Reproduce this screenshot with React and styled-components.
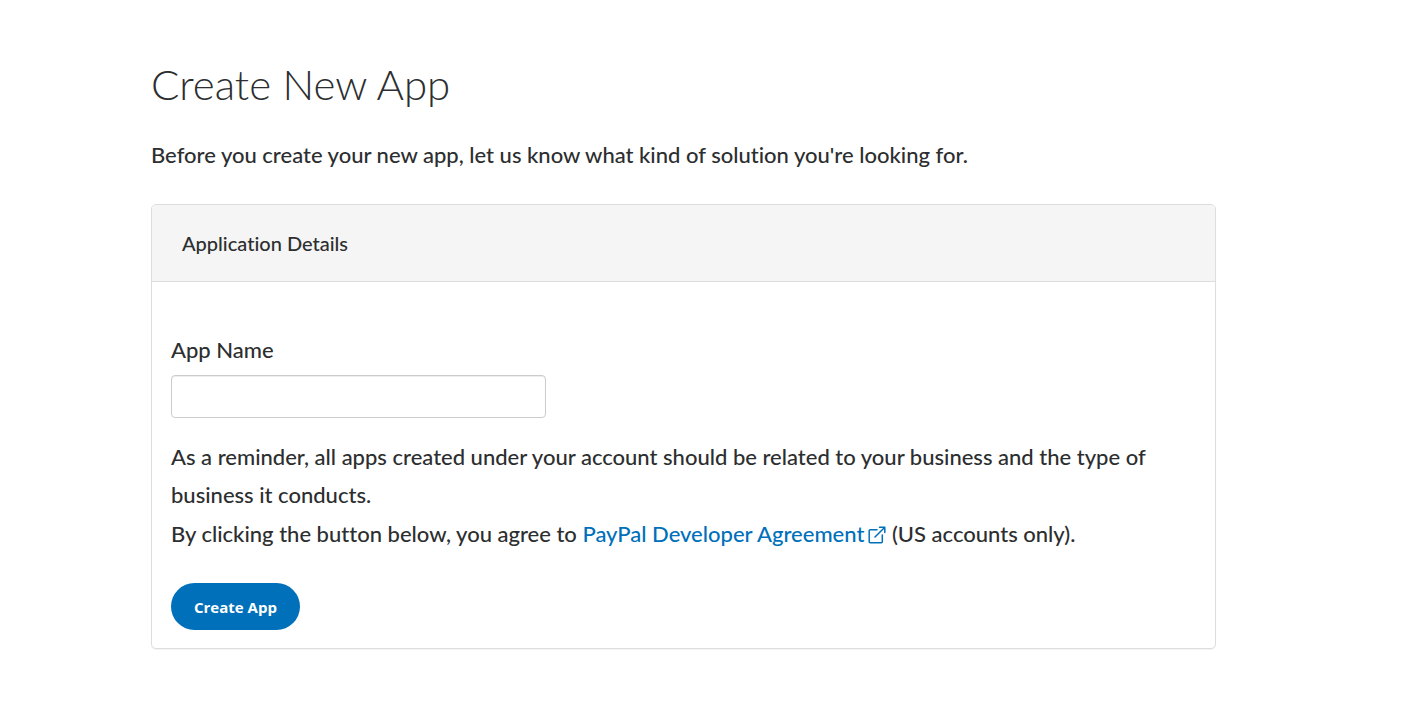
import React from "react";
import styled, { createGlobalStyle } from "styled-components";

const GlobalStyle = createGlobalStyle`
  *, *::before, *::after { box-sizing: border-box; }
  body {
    margin: 0;
    background: #fff;
    color: #2c2e2f;
    font-family: Lato, "Noto Sans", sans-serif;
    font-size: 22px;
    font-weight: 500;
    line-height: 38px;
    font-variant-ligatures: none;
  }
`;

const Page = styled.main`
  padding: 56px 211px 64px 151px;

  @media (max-width: 900px) {
    padding-left: 24px;
    padding-right: 24px;
  }
`;

const Title = styled.h1`
  margin: 0;
  font-size: 42px;
  font-weight: 300;
  line-height: 56px;
`;

const Intro = styled.p`
  margin: 24px 0 30px;
`;

const Panel = styled.section`
  border: 1px solid #ddd;
  border-radius: 5px;
  box-shadow: 0 1px 1px rgba(0, 0, 0, 0.05);
`;

const PanelHeading = styled.h2`
  margin: 0;
  padding: 19px 30px;
  border-bottom: 1px solid #ddd;
  border-radius: 4px 4px 0 0;
  background: #f5f5f5;
  font-size: 20px;
  font-weight: 500;
`;

const Form = styled.form`
  padding: 49px 19px 18px;
`;

const Label = styled.label`
  display: block;
  margin-bottom: 6px;
`;

const TextInput = styled.input`
  display: block;
  width: 375px;
  max-width: 100%;
  height: 43px;
  padding: 6px 12px;
  border: 1px solid #ccc;
  border-radius: 4px;
  box-shadow: inset 0 1px 1px rgba(0, 0, 0, 0.075);
  font: inherit;
`;

const Notes = styled.div`
  display: grid;
  gap: 1px;
  margin: 20px 0 30px;
`;

const Note = styled.p`
  margin: 0;
`;

const Link = styled.a`
  color: #0070ba;
  text-decoration: none;
`;

const LinkIcon = styled.svg`
  width: 18px;
  height: 18px;
  margin-left: 4px;
  vertical-align: -2px;
`;

const SubmitButton = styled.button`
  display: block;
  height: 47px;
  padding: 0 23px;
  border: 0;
  border-radius: 24px;
  background: #0070ba;
  color: #fff;
  font-family: "Open Sans", sans-serif;
  font-size: 15px;
  font-weight: 700;
`;

export default function App() {
  return (
    <>
      <GlobalStyle />
      <Page>
        <Title>Create New App</Title>
        <Intro>Before you create your new app, let us know what kind of solution you're looking for.</Intro>
        <Panel>
          <PanelHeading>Application Details</PanelHeading>
          <Form>
            <Label htmlFor="app-name">App Name</Label>
            <TextInput id="app-name" type="text" />
            <Notes>
              <Note>
                As a reminder, all apps created under your account should be related to your business and the type of
                business it conducts.
              </Note>
              <Note>
                By clicking the button below, you agree to{" "}
                <Link href="#agreement">
                  PayPal Developer Agreement
                  <LinkIcon
                    viewBox="0 0 18 18"
                    fill="none"
                    stroke="currentColor"
                    strokeWidth="1.5"
                    strokeLinejoin="round"
                    strokeLinecap="round"
                    aria-hidden="true"
                  >
                    <path d="M9 3.7H2.2a1 1 0 0 0-1 1V15.8a1 1 0 0 0 1 1H13.3a1 1 0 0 0 1-1V9M11.5 1.2h5.3v5.3M16.8 1.2L7 11" />
                  </LinkIcon>
                </Link>{" "}
                (US accounts only).
              </Note>
            </Notes>
            <SubmitButton type="button">Create App</SubmitButton>
          </Form>
        </Panel>
      </Page>
    </>
  );
}
